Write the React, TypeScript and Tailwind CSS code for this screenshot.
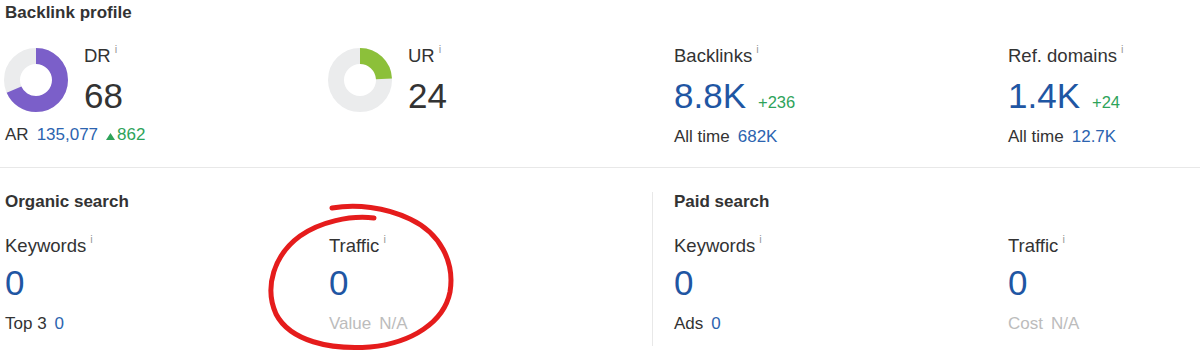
import type { ReactNode } from 'react';

const BLUE = 'text-[#1f56a3]';

function Info() {
  return <span className="-mt-[2px] ml-[4px] text-[11px] leading-[11px] text-[#9a9a9a]">i</span>;
}

function Donut({ value, color }: { value: number; color: string }) {
  const r = 24;
  const c = 2 * Math.PI * r;
  return (
    <svg width="64" height="64" viewBox="0 0 64 64" className="shrink-0">
      <circle cx="32" cy="32" r={r} fill="none" stroke="#ebeced" strokeWidth="16" />
      <circle
        cx="32"
        cy="32"
        r={r}
        fill="none"
        stroke={color}
        strokeWidth="16"
        strokeDasharray={`${(value / 100) * c} ${c}`}
        transform="rotate(-90 32 32)"
      />
    </svg>
  );
}

function Label({ children }: { children: ReactNode }) {
  return (
    <div className="flex items-start text-[18.5px] leading-[20px] text-[#333]">
      {children}
      <Info />
    </div>
  );
}

function SubRow({ label, value, muted }: { label: string; value: ReactNode; muted?: boolean }) {
  return (
    <div className={`flex items-baseline text-[17px] leading-[20px] ${muted ? 'text-[#bcbcbc]' : 'text-[#333]'}`}>
      <span>{label}</span>
      <span className={`ml-[8px] ${muted ? '' : 'text-[#2c64b0]'}`}>{value}</span>
    </div>
  );
}

function RatingCell({ name, value, color, footer }: { name: string; value: number; color: string; footer?: ReactNode }) {
  return (
    <div className="flex flex-col">
      <div className="flex items-start">
        <div className="-ml-px mt-[2px]">
          <Donut value={value} color={color} />
        </div>
        <div className="ml-[16px] flex flex-col">
          <Label>{name}</Label>
          <div className="mt-[12px] text-[35px] leading-[35px] text-[#333]">{value}</div>
        </div>
      </div>
      {footer}
    </div>
  );
}

function CountCell({ name, value, delta, allTime }: { name: string; value: string; delta: string; allTime: string }) {
  return (
    <div className="flex flex-col">
      <Label>{name}</Label>
      <div className="mt-[12px] flex items-baseline">
        <span className={`text-[35px] leading-[35px] ${BLUE}`}>{value}</span>
        <span className="ml-[12px] text-[16.5px] text-[#2ea35a]">{delta}</span>
      </div>
      <div className="mt-[12px]">
        <SubRow label="All time" value={allTime} />
      </div>
    </div>
  );
}

function SearchCell({ name, sub, subValue, muted }: { name: string; sub: string; subValue: string; muted?: boolean }) {
  return (
    <div className="flex flex-col">
      <Label>{name}</Label>
      <div className={`mt-[9px] text-[35px] leading-[35px] ${BLUE}`}>0</div>
      <div className="mt-[14px]">
        <SubRow label={sub} value={subValue} muted={muted} />
      </div>
    </div>
  );
}

function SectionTitle({ children }: { children: ReactNode }) {
  return <h2 className="text-[17px] font-bold leading-[20px] text-[#333]">{children}</h2>;
}

export default function App() {
  return (
    <div className="relative h-[362px] w-[1200px] overflow-hidden bg-white font-['Liberation_Sans',Arial,sans-serif]">
      {/* backlink profile */}
      <section className="h-[167px] px-[5px] pt-[3px]">
        <SectionTitle>Backlink profile</SectionTitle>
        <div className="mt-[23px] grid grid-cols-[324px_345px_334px_1fr]">
          <RatingCell
            name="DR"
            value={68}
            color="#7b5fc9"
            footer={
              <div className="mt-[12px] flex items-baseline text-[17px] leading-[20px] text-[#333]">
                <span>AR</span>
                <span className="ml-[8px] text-[#2c64b0]">135,077</span>
                <span className="ml-[8px] flex items-baseline text-[#2ea35a]">
                  <svg width="9" height="7" viewBox="0 0 9 7" className="mr-[2px]">
                    <path d="M4.5 0L9 7H0Z" fill="#2ea35a" />
                  </svg>
                  862
                </span>
              </div>
            }
          />
          <RatingCell name="UR" value={24} color="#8cc03a" />
          <CountCell name="Backlinks" value="8.8K" delta="+236" allTime="682K" />
          <CountCell name="Ref. domains" value="1.4K" delta="+24" allTime="12.7K" />
        </div>
      </section>

      <div className="h-px bg-[#e8e8e8]" />

      {/* organic / paid search */}
      <section className="mt-[24px] flex">
        <div className="w-[652px] pl-[5px] pb-[12px]">
          <SectionTitle>Organic search</SectionTitle>
          <div className="mt-[24px] grid grid-cols-[324px_1fr]">
            <SearchCell name="Keywords" sub="Top 3" subValue="0" />
            <SearchCell name="Traffic" sub="Value" subValue="N/A" muted />
          </div>
        </div>
        <div className="flex-1 border-l border-[#e8e8e8] pl-[21px] pb-[12px]">
          <SectionTitle>Paid search</SectionTitle>
          <div className="mt-[24px] grid grid-cols-[334px_1fr]">
            <SearchCell name="Keywords" sub="Ads" subValue="0" />
            <SearchCell name="Traffic" sub="Cost" subValue="N/A" muted />
          </div>
        </div>
      </section>

      {/* hand-drawn highlight around organic traffic */}
      <svg className="pointer-events-none absolute inset-0" width="1200" height="362" viewBox="0 0 1200 362">
        <path
          d="M374 218 C350 215 320 222 300 236 C274 255 264 287 276 314 C290 341 330 350 370 347 C412 343 444 322 450 292 C455 262 440 233 410 219 C385 207 356 204 332 208"
          fill="none"
          stroke="#e51c1c"
          strokeWidth="5"
          strokeLinecap="round"
        />
      </svg>
    </div>
  );
}
